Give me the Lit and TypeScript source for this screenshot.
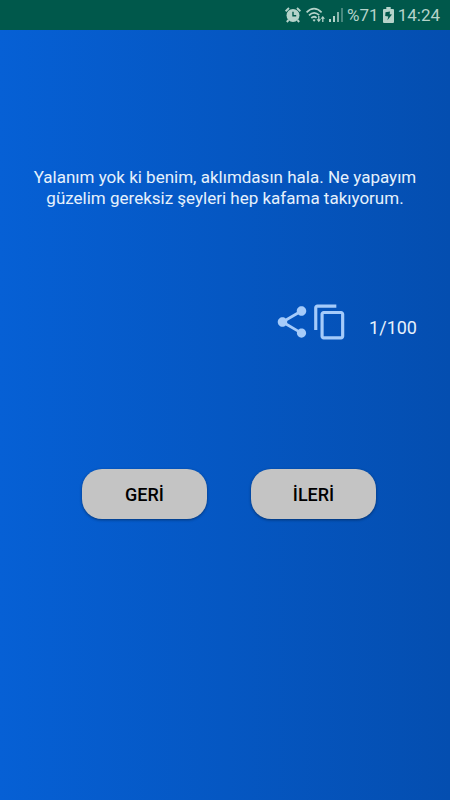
import { LitElement, html, css } from "lit";
import { customElement, state } from "lit/decorators.js";

@customElement("status-bar")
class StatusBar extends LitElement {
  static styles = css`
    :host {
      display: flex;
      align-items: center;
      justify-content: flex-end;
      height: 30px;
      padding: 0 10px;
      background: #00584b;
      color: #b5d3ca;
      font: 17px/30px Roboto, sans-serif;
    }
    svg {
      display: block;
      flex: none;
      fill: currentColor;
    }
    .alarm {
      margin-right: 5px;
    }
    .wifi,
    .signal {
      margin-right: 4px;
    }
    .battery {
      margin: 0 4px;
    }
  `;

  render() {
    return html`
      <svg class="alarm" width="16" height="16" viewBox="0 0 16 16">
        <circle cx="8" cy="8.4" r="6.5" />
        <path d="M.6 4.2 4 1M15.4 4.2 12 1M3.6 13l-1.8 2M12.4 13l1.8 2" fill="none" stroke="currentColor" stroke-width="1.9" />
        <path d="M8 4.8v4h3.2" fill="none" stroke="#00584b" stroke-width="1.4" />
      </svg>
      <svg class="wifi" width="19" height="16" viewBox="0 0 19 16">
        <g fill="none" stroke="currentColor" stroke-width="1.7">
          <path d="M.6 5.4Q8 -2 15.6 5.4" />
          <path d="M3 8.4Q8 3.4 13.2 8.2" />
          <path d="M5.3 11Q8 8.6 10.6 10.8" />
        </g>
        <path d="M6.6 13Q8 11.6 9.6 13L8.100 14.800Z" />
        <path d="M12.8 9v5M16.8 15v-4.200" stroke="currentColor" stroke-width="1.3" />
        <path d="M10.500 12.300h4.600L12.800 15.200ZM14.500 11.800h4.500L16.800 9Z" />
      </svg>
      <svg class="signal" width="14" height="14" viewBox="0 0 14 14">
        <path d="M0 11h2v3H0zM4 8h2v6H4z" />
        <path d="M8 4h2v10H8z" opacity=".75" />
        <path d="M12 0h2v14h-2z" opacity=".4" />
      </svg>
      <span>%71</span>
      <svg class="battery" width="11" height="16" viewBox="0 0 11 16">
        <path d="M3.3 0h4.4v2H10a1 1 0 0 1 1 1v12a1 1 0 0 1-1 1H1a1 1 0 0 1-1-1V3a1 1 0 0 1 1-1h2.3z" />
        <path d="M2.5 5.2 7 4.6 6.6 7.2 9 7.6 4.4 13.2 5.3 9.4 2.2 8.9Z" fill="#00584b" />
      </svg>
      <time>14:24</time>
    `;
  }
}

@customElement("app-root")
class AppRoot extends LitElement {
  static styles = css`
    :host {
      display: flex;
      flex-direction: column;
      min-height: 100vh;
      background: linear-gradient(to right, #0660d5, #044eb0);
      color: #e6f1fc;
      font: 18px/21px Roboto, sans-serif;
    }
    main {
      display: flex;
      flex-direction: column;
    }
    .quote {
      margin: 137px 24px 94px;
      font-size: 17px;
      text-align: center;
    }
    .tools {
      display: flex;
      align-items: center;
      justify-content: flex-end;
      padding-right: 33px;
    }
    .icon {
      padding: 0;
      border: 0;
      background: none;
      color: #a5cbfa;
      cursor: pointer;
    }
    .icon svg {
      display: block;
      fill: currentColor;
    }
    .count {
      margin-left: 20px;
      padding-top: 10px;
    }
    .nav {
      display: flex;
      justify-content: center;
      gap: 44px;
      margin-top: 128px;
      padding-left: 8px;
    }
    .step {
      width: 125px;
      height: 50px;
      padding: 0;
      border: 0;
      border-radius: 20px;
      background: #c4c4c4;
      box-shadow: 0 1px 3px rgba(0, 0, 0, 0.4);
      color: #000;
      font: 500 18px/21px Roboto, sans-serif;
      cursor: pointer;
    }
  `;

  @state() private index = 1;
  private readonly total = 100;
  private readonly quote =
    "Yalanım yok ki benim, aklımdasın hala. Ne yapayım güzelim gereksiz şeyleri hep kafama takıyorum.";

  private move(step: number) {
    this.index = Math.min(this.total, Math.max(1, this.index + step));
  }

  render() {
    return html`
      <status-bar></status-bar>
      <main>
        <p class="quote">${this.quote}</p>
        <div class="tools">
          <button class="icon" aria-label="Paylaş">
            <svg width="38" height="38" viewBox="0 0 24 24">
              <path d="M18 16.08c-.76 0-1.44.3-1.96.77L8.91 12.7c.05-.23.09-.46.09-.7s-.04-.47-.09-.7l7.05-4.11c.54.5 1.25.81 2.04.81 1.66 0 3-1.34 3-3s-1.34-3-3-3-3 1.34-3 3c0 .24.04.47.09.7L8.04 9.81C7.5 9.31 6.79 9 6 9c-1.66 0-3 1.34-3 3s1.34 3 3 3c.79 0 1.5-.31 2.04-.81l7.12 4.16c-.05.21-.08.43-.08.65 0 1.61 1.31 2.92 2.92 2.92s2.92-1.31 2.92-2.92-1.31-2.92-2.92-2.92z" />
            </svg>
          </button>
          <button class="icon" aria-label="Kopyala">
            <svg width="38" height="38" viewBox="0 0 24 24">
              <path d="M16 1H4c-1.1 0-2 .9-2 2v14h2V3h12V1zm3 4H8c-1.1 0-2 .9-2 2v14c0 1.1.9 2 2 2h11c1.1 0 2-.9 2-2V7c0-1.1-.9-2-2-2zm0 16H8V7h11v14z" />
            </svg>
          </button>
          <span class="count">${this.index}/${this.total}</span>
        </div>
        <div class="nav">
          <button class="step" @click=${() => this.move(-1)}>GERİ</button>
          <button class="step" @click=${() => this.move(1)}>İLERİ</button>
        </div>
      </main>
    `;
  }
}
